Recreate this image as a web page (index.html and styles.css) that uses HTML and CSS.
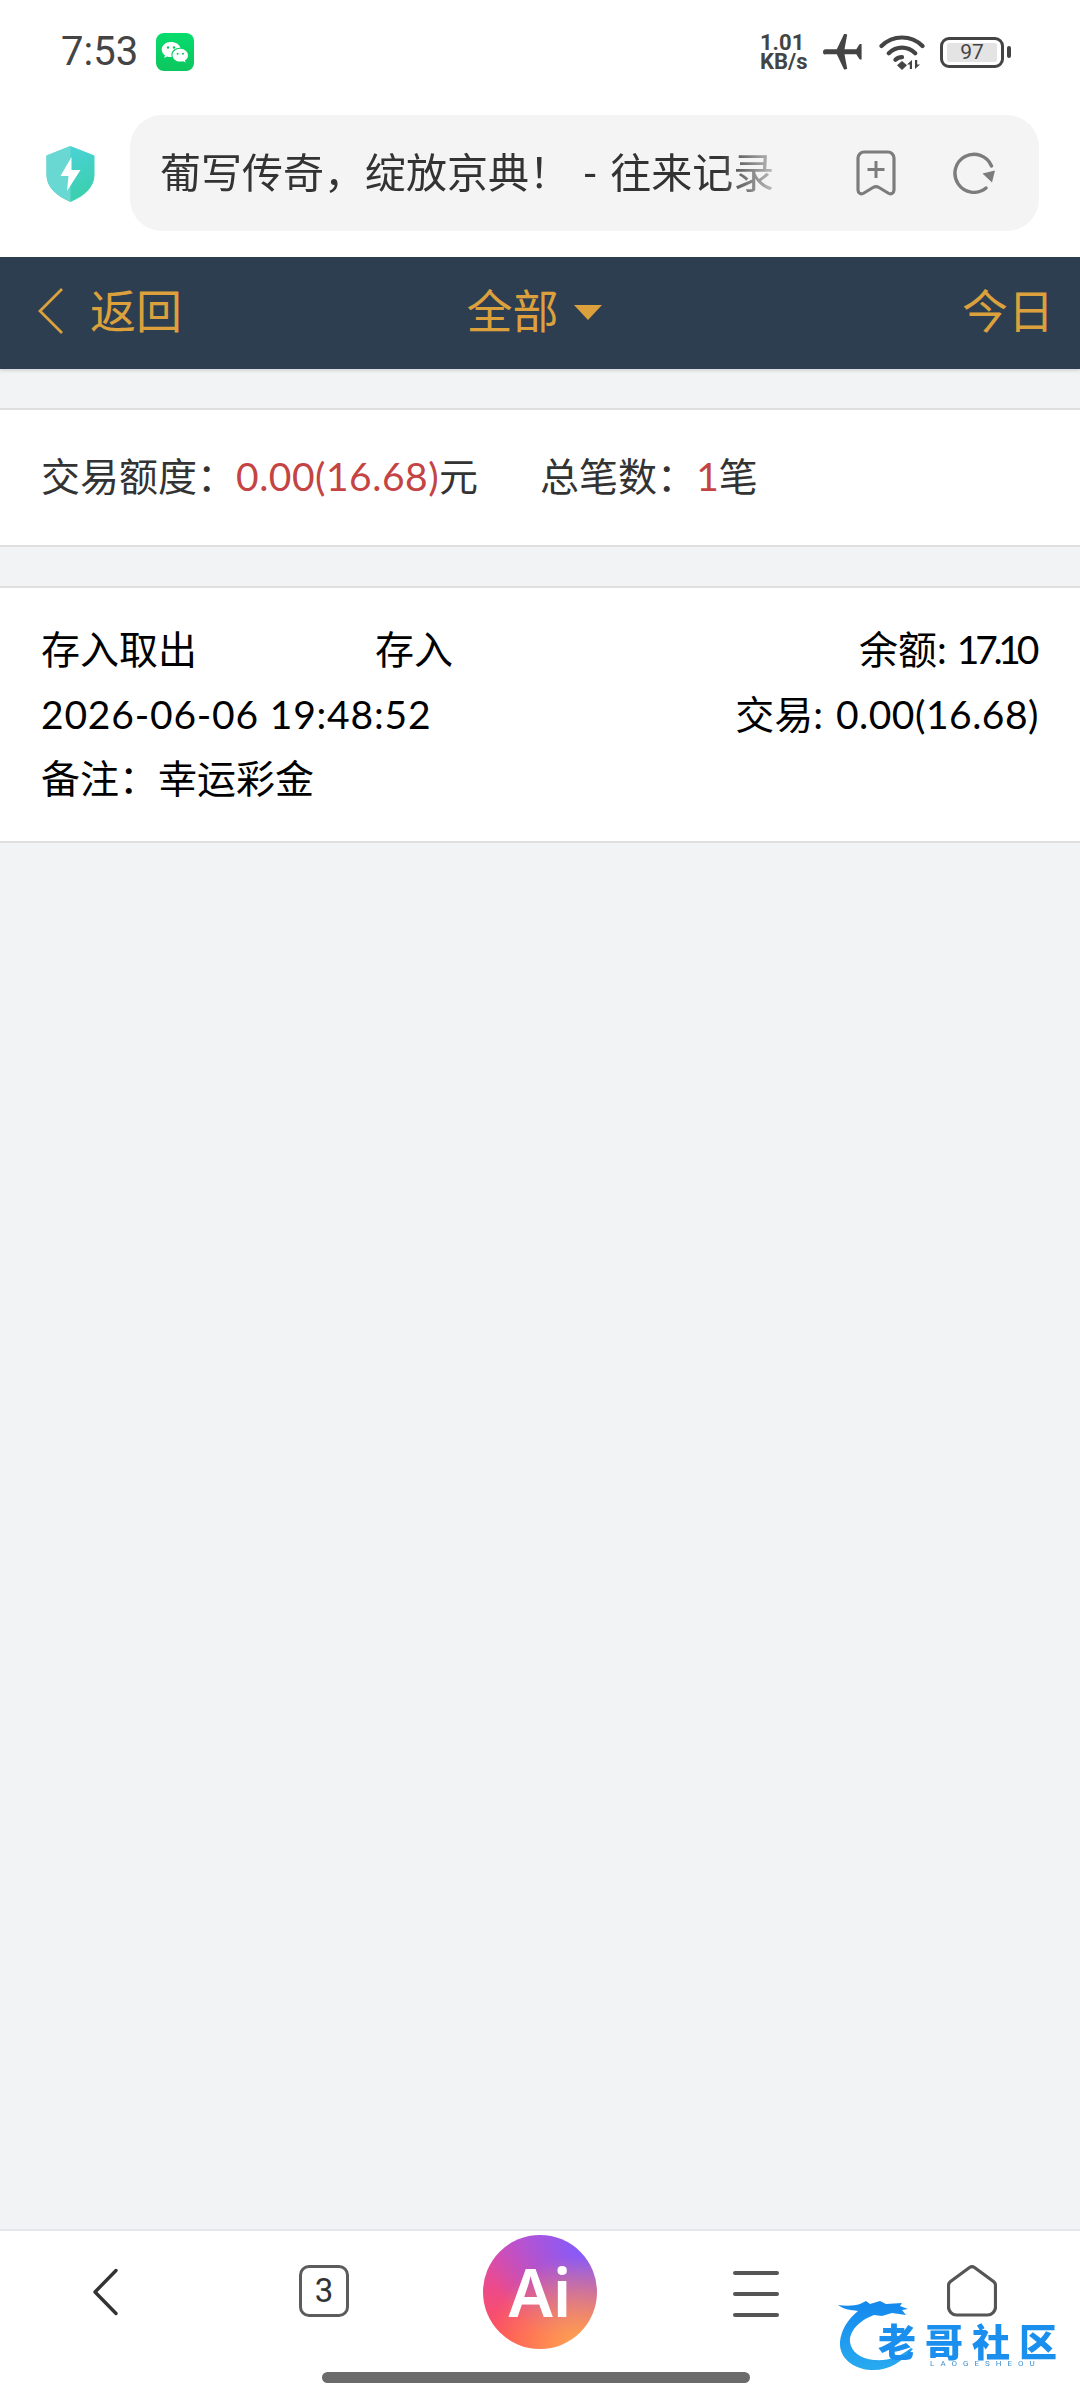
FILE: index.html
```html
<!DOCTYPE html>
<html lang="zh-CN">
<head>
<meta charset="utf-8">
<title>往来记录</title>
<link rel="stylesheet" href="styles.css">
</head>
<body>
<div class="page">
  <header class="chrome">
    <div class="status">
      <div class="status-left">
        <span class="clock">7:53</span>
        <svg class="wechat" viewBox="0 0 38 38" aria-hidden="true">
          <defs><linearGradient id="wg" x1="0" y1="0" x2="0" y2="1"><stop offset="0" stop-color="#06dc6c"/><stop offset="1" stop-color="#0cc65e"/></linearGradient></defs>
          <rect width="38" height="38" rx="8" fill="url(#wg)"/>
          <path d="M15 9c-5.300 0-9.300 3.400-9.300 7.600 0 2.400 1.300 4.400 3.300 5.800l-.8 2.600 3-1.500c1.200.4 2.400.6 3.800.6h.8c-.3-.8-.4-1.500-.4-2.300 0-4 3.700-7 8.200-7h.8C23.500 11.400 19.600 9 15 9z" fill="#fff"/>
          <path d="M24.300 15.800c-4.400 0-7.800 2.900-7.800 6.400s3.400 6.400 7.800 6.400c1 0 1.900-.1 2.800-.4l2.500 1.300-.6-2.200c1.800-1.200 3-2.900 3-4.900 0-3.500-3.400-6.600-7.700-6.600z" fill="#fff"/>
          <circle cx="12" cy="14.500" r="1.200" fill="#0cc65e"/><circle cx="18" cy="14.500" r="1.200" fill="#0cc65e"/>
          <circle cx="21.600" cy="20.800" r="1" fill="#0cc65e"/><circle cx="27" cy="20.800" r="1" fill="#0cc65e"/>
        </svg>
      </div>
      <div class="status-right">
        <div class="speed"><span class="speed-num">1.01</span><span class="speed-unit">KB/s</span></div>
        <svg class="plane" viewBox="0 0 41 36" aria-hidden="true">
          <path d="M2.500 15.200h11.300L20.800 0.500c.3-.6.800-.7 1.400-.5l2 .6-2.700 14.600h11.800l3-4.800c.2-.3.500-.5.900-.5h1.400v15.600h-1.400c-.4 0-.7-.2-.9-.5l-3-4.800H21.500l2.700 14.600-2 .6c-.6.200-1.100.1-1.400-.5l-7-14.700H2.500C1 20.900 0 19.700 0 18s1-2.800 2.500-2.800z" fill="#444"/>
        </svg>
        <svg class="wifi" viewBox="0 0 46 36" aria-hidden="true">
          <path d="M2.500 12C7.800 6.700 15 3.500 23 3.500s15.200 3.200 20.500 8.500M9.800 19.200C13.300 15.800 18 13.700 23 13.700s9.700 2.100 13.200 5.500M16.500 25.800c1.700-1.700 4-2.600 6.500-2.600" fill="none" stroke="#444" stroke-width="4.200" stroke-linecap="round"/>
          <path d="M23 27l5 4.200L23 36l-5-4.800z" fill="#444"/>
          <path d="M33 26v9h-2.200v-4.500h-2.800zM36 35v-9h2.200v4.500H41z" fill="#444"/>
        </svg>
        <div class="battery">
          <div class="battery-body"><span class="battery-level">97</span></div>
          <span class="battery-nub"></span>
        </div>
      </div>
    </div>
    <div class="addr-row">
      <svg class="shield" viewBox="0 0 48 56" aria-hidden="true">
        <defs><linearGradient id="sg" x1="0.500" y1="0" x2="0.900" y2="1"><stop offset="0" stop-color="#4bd2d8"/><stop offset="1" stop-color="#38cfa6"/></linearGradient></defs>
        <path d="M24 0L48 9.500V29c0 12-10 21-24 27C10 50 0 41 0 29V9.500z" fill="url(#sg)"/>
        <path d="M24 0L0 9.500V29c0 12 10 21 24 27z" fill="#6ad8d2"/>
        <path d="M25 11L14 30h8l-1.500 15L34 24h-9z" fill="#fff"/>
      </svg>
      <div class="addr">
        <div class="addr-title">葡写传奇&#xFF0C;绽放京典&#xFF01; - 往来记录</div>
        <svg class="bookmark" viewBox="0 0 40 46" aria-hidden="true">
          <path d="M8 2h24a6 6 0 0 1 6 6v32c0 3-3 5-6 3l-9-5.500c-2-1.200-4-1.200-6 0L8 43c-3 2-6 0-6-3V8a6 6 0 0 1 6-6z" fill="none" stroke="#7c7c7c" stroke-width="3.200" stroke-linejoin="round"/>
          <path d="M20 11v17M11.500 19.500h17" fill="none" stroke="#7c7c7c" stroke-width="3"/>
        </svg>
        <svg class="refresh" viewBox="0 0 42 42" aria-hidden="true">
          <path d="M38.500 14A19 19 0 1 0 33 36" fill="none" stroke="#7c7c7c" stroke-width="3.400" stroke-linecap="round"/>
          <path d="M29.500 21.500l12.500-3-3 12z" fill="#7c7c7c"/>
        </svg>
      </div>
    </div>
  </header>

  <nav class="topbar">
    <div class="topbar-back">
      <svg class="back-chev" viewBox="0 0 25 46" aria-hidden="true"><path d="M24 1L2 23l22 22" fill="none" stroke="#dca13c" stroke-width="2.800"/></svg>
      <span>返回</span>
    </div>
    <div class="topbar-filter"><span>全部</span><span class="caret"></span></div>
    <div class="topbar-today">今日</div>
  </nav>

  <main class="content">
    <section class="panel summary">
      <span class="sum-item">交易额度&#xFF1A;<em class="red amount">0.00(16.68)</em>元</span>
      <span class="sum-item">总笔数&#xFF1A;<em class="red">1</em>笔</span>
    </section>
    <section class="panel record">
      <div class="rec-row">
        <span class="rec-type">存入取出</span>
        <span class="rec-kind">存入</span>
        <span class="rec-right">余额: <span class="tight">17.10</span></span>
      </div>
      <div class="rec-row">
        <span class="rec-date">2026-06-06 19:48:52</span>
        <span class="rec-right">交易: <span class="amount trade">0.00(16.68)</span></span>
      </div>
      <div class="rec-row">
        <span>备注&#xFF1A;幸运彩金</span>
      </div>
    </section>
  </main>

  <footer class="bottom">
    <div class="tabs">
      <div class="tab">
        <svg class="i-back" viewBox="0 0 26 48" aria-hidden="true"><path d="M24 2.500L3 24l21 21.500" fill="none" stroke="#333" stroke-width="3.400" stroke-linecap="round" stroke-linejoin="round"/></svg>
      </div>
      <div class="tab"><div class="count">3</div></div>
      <div class="tab tab-ai"><div class="ai">Ai</div></div>
      <div class="tab">
        <div class="menu"><span></span><span></span><span></span></div>
      </div>
      <div class="tab">
        <svg class="i-home" viewBox="0 0 50 52" aria-hidden="true"><path d="M22.500 2.500L3.500 16.500c-1.300 1-2 2.200-2 3.800V42a8 8 0 0 0 8 8h31a8 8 0 0 0 8-8V20.300c0-1.600-.7-2.800-2-3.800L27.500 2.500c-1.500-1-3.500-1-5 0z" fill="none" stroke="#555" stroke-width="3.200" stroke-linejoin="round"/></svg>
      </div>
    </div>
    <div class="gesture"></div>
    <div class="watermark">
      <svg class="dragon" viewBox="0 0 100 76" aria-hidden="true">
        <defs><linearGradient id="dg" x1="0" y1="0" x2="0" y2="1"><stop offset="0" stop-color="#1488ee"/><stop offset="1" stop-color="#28aaf0"/></linearGradient></defs>
        <path d="M0 8c8 1 16 1 22-1l6-3 4 3 10-3 6 3 16-1-2 3 8 3-6 1 4 5-14-2-10 3-8-1C20 24 11 35 12 45c1 9 10 17 24 18 14 1 26-3 37-12l2 1C64 65 50 74 33 73 14 72 1 60 2 45 3 33 10 22 20 14 12 13 5 12 0 8z" fill="url(#dg)"/>
      </svg>
      <div class="wm-title">老哥社区</div>
      <div class="wm-sub">LAOGESHEOU</div>
    </div>
  </footer>
</div>
</body>
</html>
```
FILE: styles.css
```css
* { box-sizing: border-box; }
html, body { margin: 0; padding: 0; }
body {
  width: 1080px;
  height: 2400px;
  overflow: hidden;
  background: #fff;
  font-family: Lato, "Noto Sans CJK SC", sans-serif;
}
.page {
  height: 2400px;
  display: flex;
  flex-direction: column;
  background: #f2f3f5;
}

/* browser chrome */
.chrome { height: 257px; background: #fff; flex: none; }
.status {
  height: 115px;
  padding: 0 69px 11px 61px;
  display: flex;
  align-items: center;
  justify-content: space-between;
}
.status-left { display: flex; align-items: center; gap: 18px; }
.clock { font-family: Roboto, sans-serif; font-size: 40px; color: #444; line-height: 1; }
.wechat { width: 38px; height: 38px; display: block; }
.status-right { display: flex; align-items: center; }
.speed {
  width: 50px;
  margin-right: 13px;
  display: flex;
  flex-direction: column;
  color: #444;
  font-family: Roboto, sans-serif;
  font-weight: 700;
}
.speed-num { font-size: 22px; height: 19px; line-height: 19px; }
.speed-unit { font-size: 22px; height: 19px; line-height: 19px; white-space: nowrap; }
.plane { width: 41px; height: 36px; margin-right: 15px; display: block; }
.wifi { width: 46px; height: 36px; margin-right: 15px; display: block; }
.battery { display: flex; align-items: center; gap: 3px; }
.battery-body {
  width: 64px;
  height: 31px;
  border: 3px solid #444;
  border-radius: 9px;
  padding: 3px 4px;
  display: flex;
}
.battery-level {
  flex: 1;
  background: #e4e4e4;
  border-radius: 2px;
  color: #444;
  font-family: Roboto, sans-serif;
  font-size: 21px;
  line-height: 19px;
  text-align: center;
}
.battery-nub { width: 4px; height: 12px; background: #444; border-radius: 2px; }

.addr-row { display: flex; align-items: flex-start; padding-left: 46px; }
.shield { width: 49px; height: 56px; margin: 31px 35px 0 0; display: block; flex: none; }
.addr {
  width: 909px;
  height: 116px;
  background: #f4f4f4;
  border-radius: 32px;
  padding-left: 30px;
  display: flex;
  align-items: center;
}
.addr-title {
  width: 622px;
  font-size: 41px;
  word-spacing: 2px;
  line-height: 1.2;
  color: #333;
  white-space: nowrap;
  -webkit-mask-image: linear-gradient(90deg, #000 90%, rgba(0,0,0,.25) 99%);
  mask-image: linear-gradient(90deg, #000 90%, rgba(0,0,0,.25) 99%);
}
.bookmark { width: 40px; height: 46px; margin-left: 74px; display: block; }
.refresh { width: 42px; height: 42px; margin-left: 57px; display: block; }

/* dark title bar */
.topbar {
  height: 112px;
  flex: none;
  background: #2c3e50;
  color: #dca13c;
  font-size: 46px;
  padding: 0 26px 10px 38px;
  display: grid;
  grid-template-columns: 1fr auto 1fr;
  align-items: center;
  box-shadow: 0 2px 3px rgba(0,0,0,.12);
}
.topbar-back { display: flex; align-items: center; gap: 27px; }
.back-chev { width: 25px; height: 46px; display: block; margin-top: 6px; }
.topbar-filter { display: flex; align-items: center; gap: 15px; margin-right: 24px; }
.caret {
  width: 0;
  height: 0;
  border-left: 14px solid transparent;
  border-right: 14px solid transparent;
  border-top: 15px solid #dca13c;
  margin-top: 9px;
}
.topbar-today { text-align: right; }

/* content */
.content { flex: 1; padding-top: 39px; display: flex; flex-direction: column; gap: 39px; }
.panel {
  background: #fff;
  border-top: 2px solid #dfdfdf;
  border-bottom: 2px solid #dfdfdf;
  padding: 0 41px;
  font-size: 39px;
}
.summary {
  height: 139px;
  padding-bottom: 8px;
  display: flex;
  align-items: center;
  gap: 62px;
  color: #333;
}
.red { color: #c44444; font-style: normal; }
.amount { letter-spacing: .5px; }
.trade { margin-left: 3px; }
.record { height: 257px; padding-top: 29px; color: #000; }
.rec-row { height: 64.500px; line-height: 64.500px; display: flex; white-space: nowrap; }
.rec-type { width: 334px; }
.rec-right { margin-left: auto; }
.rec-date { letter-spacing: .8px; }
.tight { letter-spacing: -4.300px; margin-right: 4px; }

/* bottom bar */
.bottom {
  height: 171px;
  flex: none;
  background: #fff;
  border-top: 2px solid #e4e6e9;
  position: relative;
}
.tabs { display: grid; grid-template-columns: repeat(5, 216px); height: 141px; }
.tab { display: flex; justify-content: center; padding-top: 34px; }
.tab-ai { padding-top: 4px; }
.i-back { width: 26px; height: 48px; display: block; margin: 3px 6px 0 0; }
.count {
  width: 50px;
  height: 52px;
  border: 3px solid #5c5c5c;
  border-radius: 10px;
  font-family: Roboto, sans-serif;
  font-size: 33px;
  color: #333;
  text-align: center;
  line-height: 46px;
}
.ai {
  width: 114px;
  height: 114px;
  border-radius: 50%;
  background:
    radial-gradient(circle at 85% 100%, #ffa850 0, rgba(255,168,80,0) 62%),
    radial-gradient(circle at 90% 10%, #7f5cff 0, rgba(127,92,255,0) 68%),
    linear-gradient(180deg, #d04ec0 0%, #ec4a8c 45%, #ff5058 90%);
  color: #fff;
  font-family: "Noto Sans", sans-serif;
  font-weight: 600;
  font-size: 66px;
  line-height: 112px;
  text-align: center;
}
.menu { width: 46px; height: 46px; margin-top: 6px; display: flex; flex-direction: column; justify-content: space-between; }
.menu span { height: 4px; border-radius: 2px; background: #555; }
.i-home { width: 50px; height: 52px; display: block; }
.gesture {
  width: 428px;
  height: 11px;
  margin: 0 0 0 322px;
  border-radius: 6px;
  background: #6b6b6b;
}

/* overlaid watermark */
.watermark {
  position: absolute;
  left: 838px;
  top: 66px;
  width: 226px;
  height: 80px;
  filter: blur(.7px);
}
.dragon { position: absolute; left: 0; top: 0; width: 100px; height: 76px; display: block; }
.wm-title {
  position: absolute;
  left: 40px;
  top: 24px;
  font-family: "Noto Sans CJK SC", sans-serif;
  font-weight: 900;
  font-size: 38px;
  line-height: 38px;
  letter-spacing: 9px;
  color: #1a8fee;
  white-space: nowrap;
}
.wm-sub {
  position: absolute;
  left: 92px;
  top: 63px;
  font-family: Roboto, sans-serif;
  font-size: 8px;
  line-height: 8px;
  letter-spacing: 6px;
  color: #3f8fd0;
}
```
